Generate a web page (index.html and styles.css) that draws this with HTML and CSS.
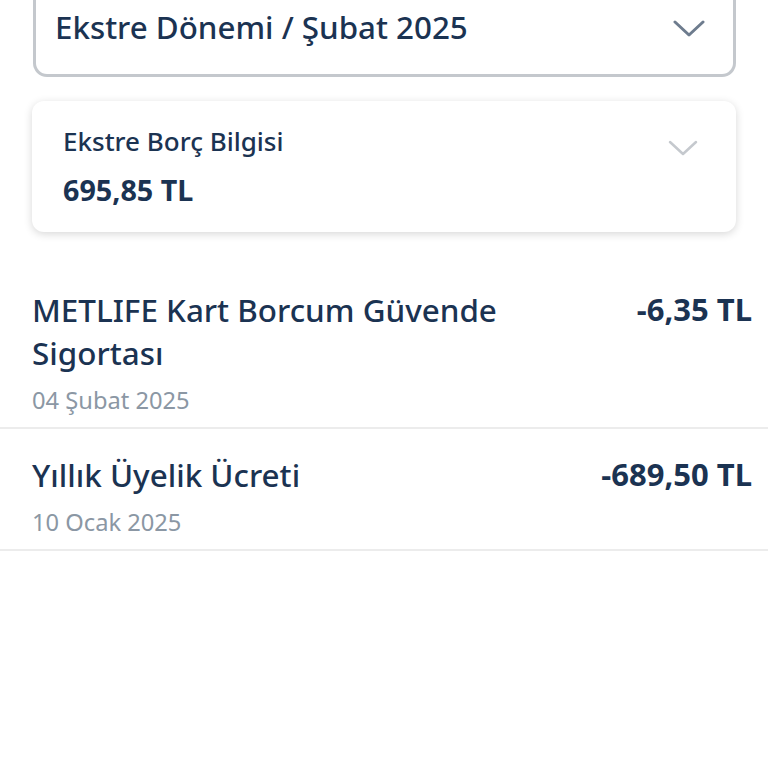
FILE: index.html
```html
<!DOCTYPE html>
<html lang="tr">

<head>
    <meta charset="UTF-8" />
    <meta name="viewport" content="width=device-width, initial-scale=1.0" />
    <title>Ekstre</title>
    <link rel="stylesheet" href="styles.css">
</head>

<body>
    <div class="period">
        <span class="period-text">Ekstre Dönemi / Şubat 2025</span>
        <svg class="chevron" width="32" height="18" viewBox="0 0 32 18">
            <path d="M2 2 L16 15 L30 2" fill="none" stroke="#6e7c8e" stroke-width="3" stroke-linecap="round" stroke-linejoin="round" />
        </svg>
    </div>

    <div class="card">
        <div class="card-info">
            <div class="card-label">Ekstre Borç Bilgisi</div>
            <div class="card-amount">695,85 TL</div>
        </div>
        <svg class="chevron-light" width="30" height="17" viewBox="0 0 30 17">
            <path d="M2 2 L15 14 L28 2" fill="none" stroke="#c5c9ce" stroke-width="2.5" stroke-linecap="round" stroke-linejoin="round" />
        </svg>
    </div>

    <ul class="list">
        <li class="item">
            <div class="item-main">
                <div class="item-title">METLIFE Kart Borcum Güvende Sigortası</div>
                <div class="item-date">04 Şubat 2025</div>
            </div>
            <div class="item-amount">-6,35 TL</div>
        </li>
        <li class="item">
            <div class="item-main">
                <div class="item-title">Yıllık Üyelik Ücreti</div>
                <div class="item-date">10 Ocak 2025</div>
            </div>
            <div class="item-amount">-689,50 TL</div>
        </li>
    </ul>
</body>

</html>
```

FILE: styles.css
```css
body {
    margin: 0;
    background-color: #ffffff;
    font-family: "Noto Sans", "Open Sans", sans-serif;
    color: #1b3352;
}

.period {
    display: flex;
    align-items: center;
    justify-content: space-between;
    margin: -20px 32px 0 33px;
    height: 97px;
    padding: 0 28px 0 19px;
    box-sizing: border-box;
    border: 3px solid #c4c8cd;
    border-top: none;
    border-radius: 0 0 14px 14px;
}

.period-text {
    font-size: 31.3px;
    font-weight: 500;
}

.chevron {
    margin-top: 4px;
}

.card {
    display: flex;
    justify-content: space-between;
    align-items: flex-start;
    margin: 24px 32px 0 32px;
    height: 131px;
    box-sizing: border-box;
    padding: 22px 38px 0 31px;
    border-radius: 12px;
    box-shadow: 0 2px 8px rgba(0, 0, 0, 0.16);
}

.card-label {
    font-size: 26px;
    font-weight: 500;
}

.card-amount {
    font-size: 28.7px;
    font-weight: bold;
    margin-top: 11px;
}

.chevron-light {
    margin-top: 17px;
}

.list {
    list-style: none;
    margin: 32px 0 0 0;
    padding: 0;
}

.item {
    display: flex;
    justify-content: space-between;
    align-items: flex-start;
    padding: 24px 16px 11px 32px;
    border-bottom: 2px solid #ececec;
}

.item-main {
    width: 500px;
}

.item-title {
    font-size: 31.4px;
    font-weight: 500;
    line-height: 43px;
}

.item-date {
    font-size: 23.7px;
    color: #8b97a4;
    margin-top: 10px;
}

.item-amount {
    font-size: 31px;
    font-weight: bold;
    line-height: 43px;
}
```
